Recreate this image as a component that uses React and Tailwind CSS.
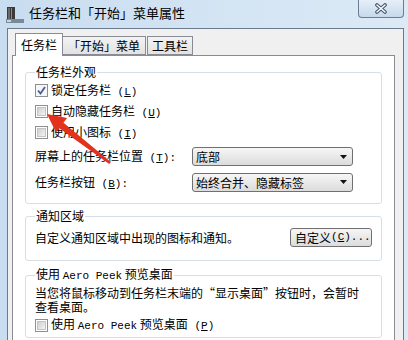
import React from 'react';

const FONT = { fontFamily: '"Noto Sans CJK SC", "Noto Sans", sans-serif' };

// half-width latin, like SimSun's
const Mono = ({ children }) => (
  <span className="font-['Liberation_Mono',monospace] text-[11px]">{children}</span>
);

const Key = ({ k }) => (
  <Mono>
    {' ('}
    <u>{k}</u>
    {')'}
  </Mono>
);

const CheckBox = ({ checked }) => (
  <span className="w-[13px] h-[13px] shrink-0 border border-[#8e8f8f] bg-white flex items-center justify-center">
    {checked ? (
      <svg width="11" height="11" viewBox="0 0 11 11">
        <rect x="0" y="0" width="11" height="11" fill="#f4f6f8" />
        <path d="M2 5.5 L4.5 8.5 L9 2" fill="none" stroke="#4a5f8f" strokeWidth="1.8" />
      </svg>
    ) : (
      <span className="w-[9px] h-[9px] border border-[#c4c4c4] bg-linear-to-br from-[#cfcfcf] to-[#f4f4f4]" />
    )}
  </span>
);

const Select = ({ value }) => (
  <div className="w-[161px] h-[19px] border border-[#707070] rounded-[3px] bg-linear-to-b from-[#f6f6f6] to-[#dcdcdc] flex items-center pl-[3px] pr-[5px]">
    <span className="flex-1 leading-[17px]">{value}</span>
    <svg width="7" height="4" viewBox="0 0 7 4">
      <path d="M0 0h7L3.5 4z" fill="#111" />
    </svg>
  </div>
);

const Group = ({ title, className = '', children }) => (
  <fieldset className={`mx-[12px] border border-[#d5dfe5] rounded-[3px] pl-[9px] pr-[9px] ${className}`}>
    <legend className="px-[1px] leading-[16px]">{title}</legend>
    {children}
  </fieldset>
);

const CloseIcon = () => (
  <svg width="14" height="11" viewBox="0 0 14 11">
    <path d="M3 2 L11 9 M11 2 L3 9" stroke="#3d4f66" strokeWidth="3.6" strokeLinecap="round" />
    <path d="M3 2 L11 9 M11 2 L3 9" stroke="#ffffff" strokeWidth="1.6" strokeLinecap="round" />
  </svg>
);

const WindowIcon = () => (
  <svg width="18" height="16" viewBox="0 0 18 16">
    <rect x="1" y="0" width="8" height="13" fill="#3a3a3a" />
    <rect x="2" y="1" width="2" height="11" fill="#6a6a6a" />
    <rect x="5" y="1" width="1" height="11" fill="#8a8a8a" />
    <rect x="0" y="12" width="18" height="4" fill="#7b8a99" />
    <rect x="1" y="13" width="4" height="2" fill="#c8d4df" />
  </svg>
);

const RedArrow = () => (
  <svg className="absolute left-0 top-0 pointer-events-none" width="408" height="340">
    <polygon points="47,114 67,118 56,132.5" fill="#e2311d" />
    <polygon points="63.2,122.4 59,128 109.2,164 110.8,162" fill="#e2311d" />
  </svg>
);

const App = () => {
  return (
    <div
      className="relative w-[408px] h-[340px] overflow-hidden bg-linear-to-r from-[#c9ddf0] to-[#dceaf6] text-[12px] text-black"
      style={FONT}
    >
      {/* Title bar */}
      <div className="h-[28px] flex items-start">
        <div className="ml-[6px] mt-[7px]">
          <WindowIcon />
        </div>
        <div className="ml-[5px] mt-[5px] text-[13px] leading-[16px]">任务栏和「开始」菜单属性</div>
        <div className="flex-1" />
        <div className="mr-[4px] w-[46px] h-[18px] border border-t-0 border-[#6d7d8f] rounded-b-[4px] bg-linear-to-b from-[#e6eff8] to-[#c6d9ec] flex items-center justify-center">
          <CloseIcon />
        </div>
      </div>

      {/* Client area */}
      <div className="ml-[7px] w-[397px] h-[320px] border border-b-0 border-[#6b7b8c] bg-[#f0f0f0] pt-[4px]">
        {/* Tabs */}
        <div className="flex items-end ml-[7px] h-[22px]">
          <div className="relative z-10 h-[23px] mb-[-1px] px-[5px] border border-b-0 border-[#898c95] bg-white flex items-center">
            任务栏
          </div>
          <div className="h-[19px] px-[5px] border border-l-0 border-[#898c95] bg-linear-to-b from-[#f3f3f3] to-[#e2e2e2] flex items-center">
            「开始」菜单
          </div>
          <div className="h-[19px] ml-[1px] px-[4px] border border-[#898c95] bg-linear-to-b from-[#f3f3f3] to-[#e2e2e2] flex items-center">
            工具栏
          </div>
        </div>

        {/* Tab panel */}
        <div className="ml-[4px] w-[383px] border border-[#898c95] bg-white pt-[8px] pb-[20px]">
          <Group title="任务栏外观" className="pb-[11px]">
            <div className="flex flex-col">
              <div className="h-[21px] flex items-center gap-[3px]">
                <CheckBox checked />
                <span>
                  锁定任务栏<Key k="L" />
                </span>
              </div>
              <div className="h-[21px] flex items-center gap-[3px]">
                <CheckBox />
                <span>
                  自动隐藏任务栏<Key k="U" />
                </span>
              </div>
              <div className="h-[21px] flex items-center gap-[3px]">
                <CheckBox />
                <span>
                  使用小图标<Key k="I" />
                </span>
              </div>
            </div>
            <div className="mt-[4px] flex items-center">
              <span className="w-[157px] shrink-0">
                屏幕上的任务栏位置<Key k="T" />
                <Mono>:</Mono>
              </span>
              <Select value="底部" />
            </div>
            <div className="mt-[6px] flex items-center">
              <span className="w-[157px] shrink-0">
                任务栏按钮<Key k="B" />
                <Mono>:</Mono>
              </span>
              <Select value="始终合并、隐藏标签" />
            </div>
          </Group>

          <Group title="通知区域" className="mt-[4px] pb-[13px]">
            <div className="mt-[4px] flex items-center justify-between">
              <span>自定义通知区域中出现的图标和通知。</span>
              <div className="w-[82px] h-[19px] border border-[#707070] rounded-[3px] bg-linear-to-b from-[#f6f6f6] to-[#dcdcdc] flex items-center pl-[4px]">
                自定义<Mono> (<u>C</u>)...</Mono>
              </div>
            </div>
          </Group>

          <Group
            title={
              <span>
                使用 <Mono>Aero Peek</Mono> 预览桌面
              </span>
            }
            className="mt-[5px] pb-[4px]"
          >
            <div className="mt-[2px] leading-[14px] whitespace-nowrap">
              当您将鼠标移动到任务栏末端的“显示桌面”按钮时，会暂时
              <br />
              查看桌面。
            </div>
            <div className="mt-[3px] h-[16px] flex items-center gap-[3px]">
              <CheckBox />
              <span>
                使用 <Mono>Aero Peek</Mono> 预览桌面<Key k="P" />
              </span>
            </div>
          </Group>
        </div>
      </div>

      <RedArrow />
    </div>
  );
};

export default App;
